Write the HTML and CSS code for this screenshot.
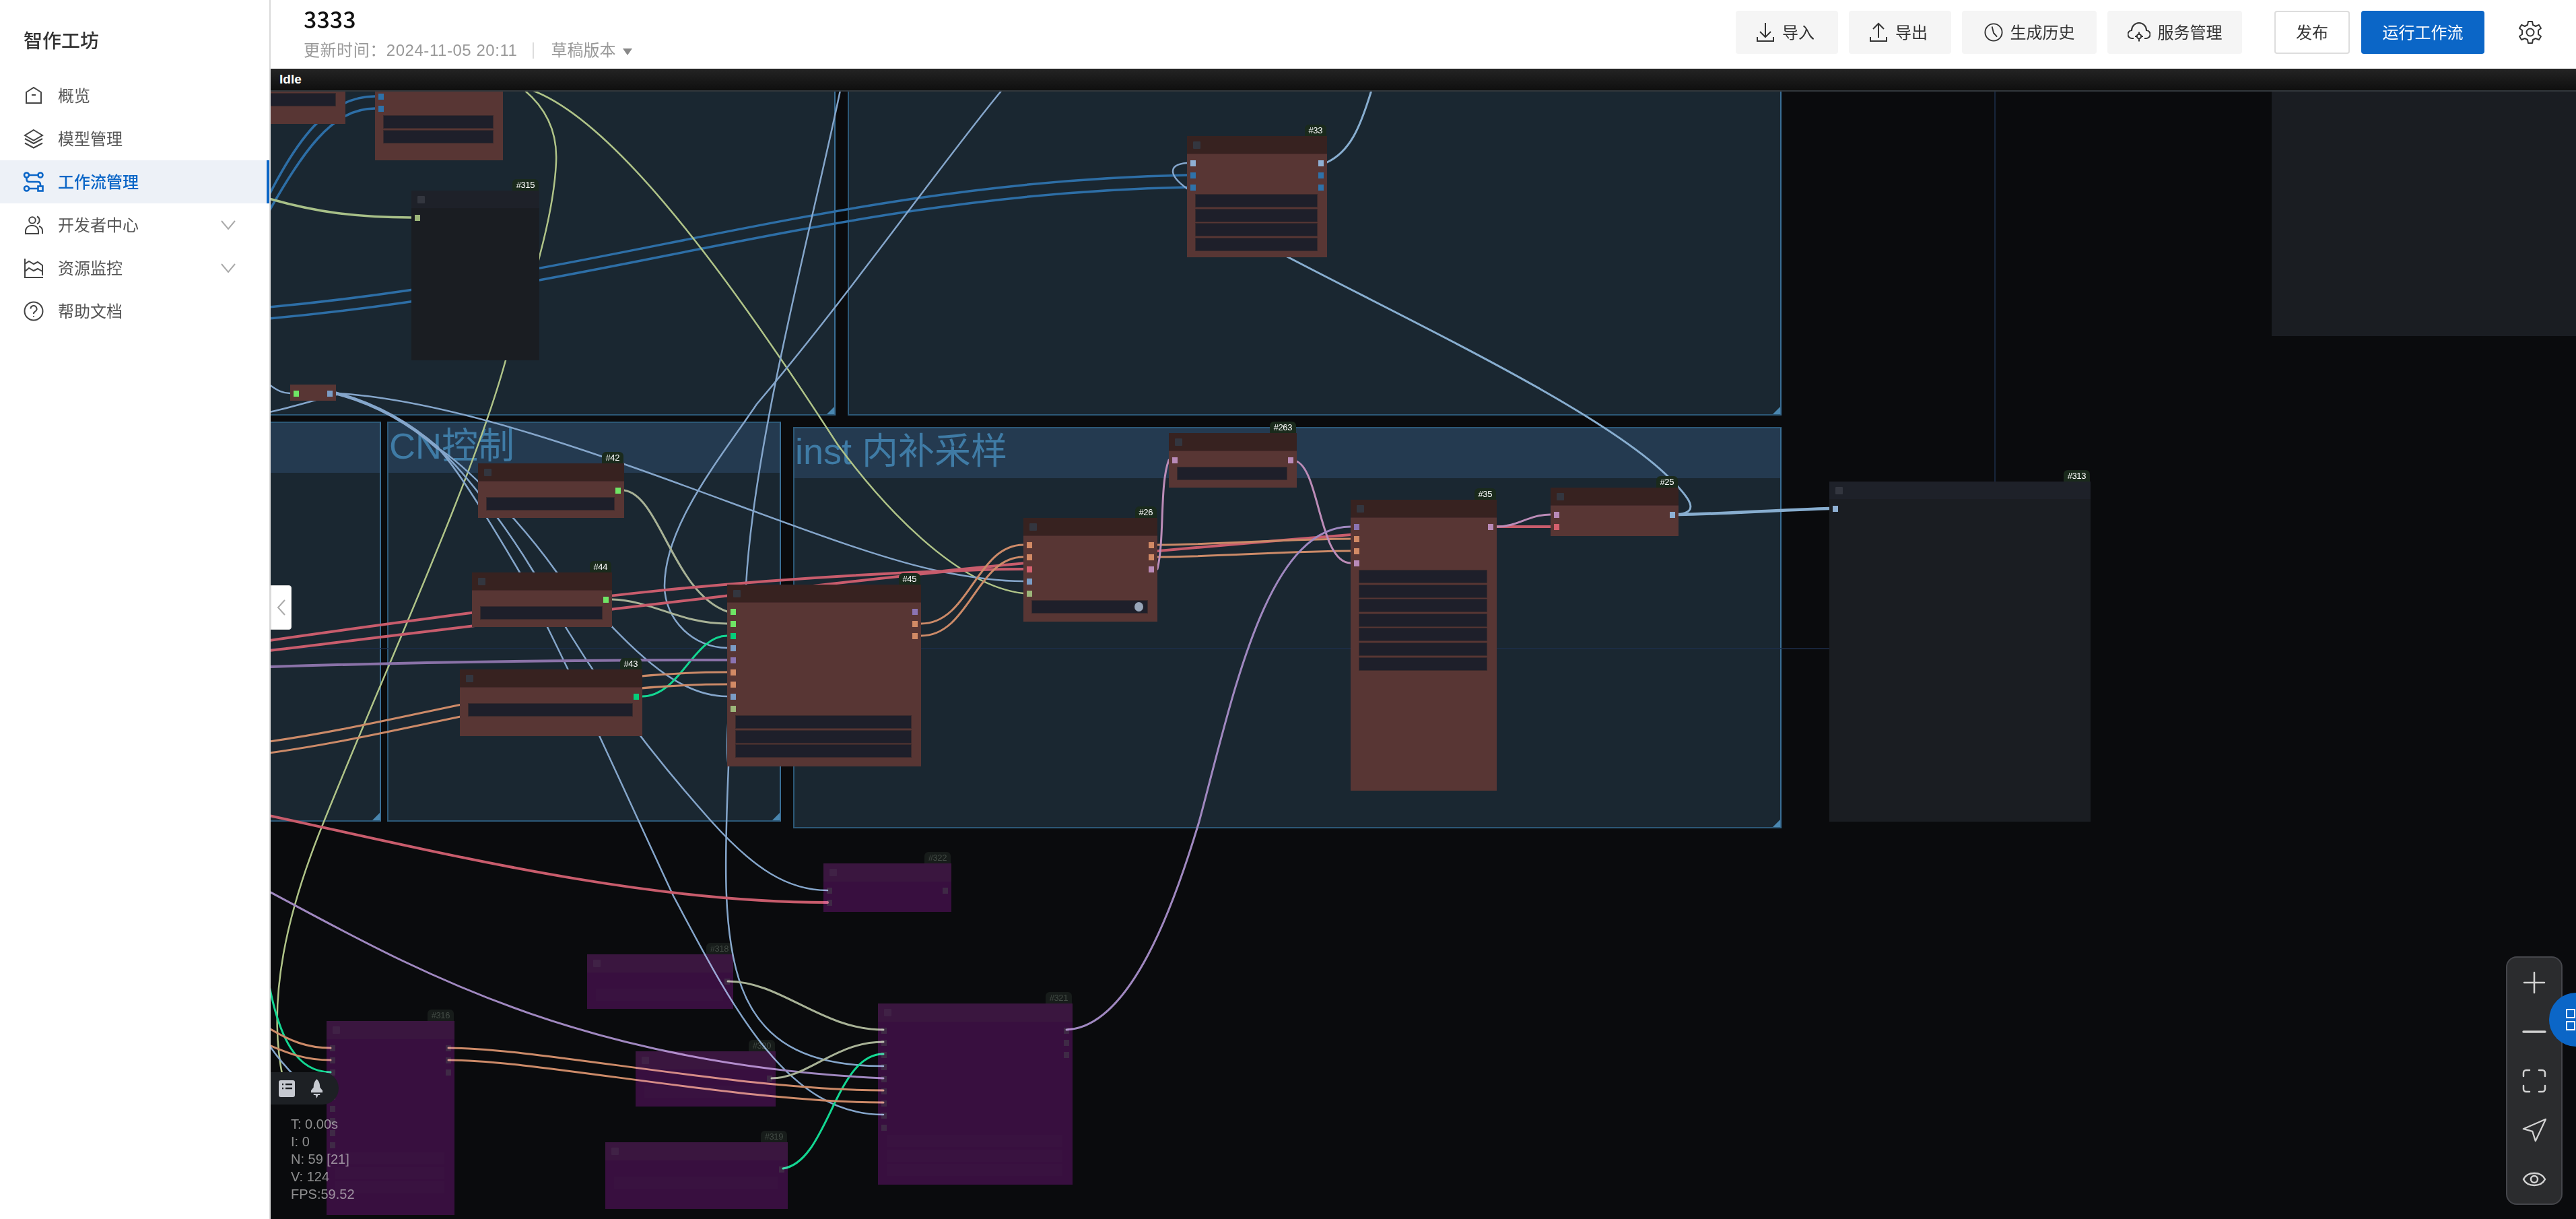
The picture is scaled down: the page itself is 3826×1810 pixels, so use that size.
FILE: index.html
```html
<!DOCTYPE html>
<html lang="zh-CN">
<head>
<meta charset="utf-8">
<title>智作工坊</title>
<link rel="stylesheet" href="styles.css">
</head>
<body>
<div class="app">
  <aside class="sidebar">
    <div class="brand">智作工坊</div>
    <nav class="nav">
      <a class="nav-item"><svg class="nav-ico" viewBox="0 0 32 32"><path d="M5 11 16 4l11 7v16H5z"/><path d="M13 15h6"/></svg><span>概览</span></a>
      <a class="nav-item"><svg class="nav-ico" viewBox="0 0 32 32"><path d="M16 3l13 8-13 7.5L3 11z"/><path d="M3 16l13 7 13-7M3 22.5l13 7 13-7"/></svg><span>模型管理</span></a>
      <a class="nav-item active"><svg class="nav-ico" viewBox="0 0 32 32"><circle cx="5.5" cy="6" r="3.5"/><circle cx="26" cy="6" r="3.5"/><circle cx="5.5" cy="26" r="3.5"/><rect x="22.5" y="22.5" width="7" height="7"/><path d="M9 6h13.5M9 26h13.5M5.500 9.500V12q0 4 4 4H22q4 0 4 4v2.500"/></svg><span>工作流管理</span></a>
      <a class="nav-item"><svg class="nav-ico" viewBox="0 0 32 32"><circle cx="14" cy="9" r="4.800"/><path d="M21 3.500a6 6 0 0 1 0 11"/><path d="M4 29v-4a8 8 0 0 1 8-8h3a8 8 0 0 1 8 8v4z"/><path d="M24 18a7 7 0 0 1 5 7v4"/></svg><span>开发者中心</span><svg class="chev" viewBox="0 0 24 16"><path d="M2 2l10 12L22 2"/></svg></a>
      <a class="nav-item"><svg class="nav-ico" viewBox="0 0 32 32"><path d="M3 2v28h27"/><path d="M3 10l6-4 7 4 6-3 7 5v15"/><path d="M3 21l6-5 7 4 6-3 7 4"/></svg><span>资源监控</span><svg class="chev" viewBox="0 0 24 16"><path d="M2 2l10 12L22 2"/></svg></a>
      <a class="nav-item"><svg class="nav-ico" viewBox="0 0 32 32"><circle cx="16" cy="16" r="13.500"/><path d="M11.500 12.500a4.500 4.500 0 1 1 6.800 3.800c-1.600 1-2.300 2-2.300 3.700"/><path d="M16 23v1.500"/></svg><span>帮助文档</span></a>
    </nav>
  </aside>

  <main class="main">
    <header class="header">
      <div class="doc">
        <div class="doc-title">3333</div>
        <div class="doc-meta"><span class="stamp">更新时间：2024-11-05 20:11</span><i class="meta-sep"></i><span class="draft">草稿版本</span><i class="caret"></i></div>
      </div>
      <div class="actions">
        <button class="btn"><svg class="btn-ico" viewBox="0 0 28 30"><path d="M14 1v21M6 14l8 8 8-8M2 22v6h24v-6"/></svg>导入</button>
        <button class="btn"><svg class="btn-ico" viewBox="0 0 28 30"><path d="M14 23V2M6 10l8-8 8 8M2 22v6h24v-6"/></svg>导出</button>
        <button class="btn wide"><svg class="btn-ico" viewBox="0 0 30 30"><circle cx="15" cy="15" r="13.500"/><path d="M12.500 6l2.500 10 5.500 6"/></svg>生成历史</button>
        <button class="btn wide"><svg class="btn-ico cloud" viewBox="0 0 34 30"><path d="M9 24H7a6 6 0 0 1-1-12 11 11 0 0 1 22 0 6 6 0 0 1-1 12h-2"/><circle cx="17" cy="21" r="3.200"/><path d="M17 14.500v3M17 24.500v4M11 21h3M20 21h3"/></svg>服务管理</button>
        <button class="btn-outline">发布</button>
        <button class="btn-primary">运行工作流</button>
        <svg class="gear" viewBox="0 0 36 36"><path d="M15 2h6l1 5 4 2 5-2 3 5-4 3v6l4 3-3 5-5-2-4 2-1 5h-6l-1-5-4-2-5 2-3-5 4-3v-6l-4-3 3-5 5 2 4-2z"/><circle cx="18" cy="18" r="5.500"/></svg>
      </div>
    </header>

    <section class="canvas">
      <div class="world">
        <div class="group cut" style="left:300px;top:60px;width:941px;height:557px"></div>
        <div class="group cut" style="left:1259px;top:60px;width:1387px;height:557px"></div>
        <div class="group" style="left:300px;top:626px;width:266px;height:594px"><div class="band"></div></div>
        <div class="group" style="left:575px;top:626px;width:585px;height:594px"><div class="band">CN控制</div></div>
        <div class="group" style="left:1178px;top:634px;width:1468px;height:596px"><div class="band">inst 内补采样</div></div>

        <svg class="links" viewBox="0 0 3826 1810">
          <path class="guide" d="M2963 134V715M400 963H2717"/>
          <path class="blue" d="M380 330C440 200 490 143 557 143M385 340C450 220 495 161 557 161M400 456C900 410 1250 270 1763 260M400 473C900 428 1250 288 1763 278"/>
          <path class="sage" d="M400 295C470 315 530 323 611 323"/>
          <path class="lime" d="M779 134C810 160 828 195 826 240C824 290 812 340 802 378C790 430 770 470 751 535C700 720 560 1020 473 1240C430 1350 395 1480 420 1600"/>
          <path class="lime" d="M790 134C900 175 1050 360 1244 660C1310 750 1420 870 1520 881"/>
          <path class="steel" d="M1248 134C1210 320 1120 650 1108 869C1090 950 1075 1100 1082 1138C1070 1420 1070 1583 1312 1583"/>
          <path class="steel" d="M1488 134C1400 240 1260 440 1124 600C1070 680 987 780 987 870C987 920 1030 962 1080 962"/>
          <path class="steel" d="M499 584C780 600 1200 810 1400 849C1440 857 1480 863 1520 863"/>
          <path class="steel" d="M650 665C675 690 725 770 772 850C850 1000 930 1180 1000 1330C1090 1500 1170 1655 1312 1655"/>
          <path class="steel" d="M650 665C680 690 745 770 793 850C870 990 950 1100 1057 1220C1120 1290 1170 1322 1229 1322"/>
          <path class="steel" d="M650 665C690 690 770 770 827 850C900 910 980 1034 1080 1034"/>
          <path class="steel bundle" d="M499 584C560 600 610 630 650 665"/>
          <path class="steel" d="M400 571C412 580 420 584 431 584M400 612C440 603 470 593 500 586M1763 242C1735 244 1735 260 1763 280"/>
          <path class="sky" d="M1971 241C2005 225 2020 190 2037 134M1900 375C2100 480 2380 610 2480 710C2510 740 2525 760 2493 764"/>
          <path class="sky thick" d="M2493 764C2560 763 2650 757 2717 755"/>
          <path class="ash" d="M927 728C980 735 1000 880 1080 908M909 890C970 892 1010 926 1080 926"/>
          <path class="mint" d="M954 1034C1010 1034 1030 944 1080 944M400 1464C415 1540 440 1592 491 1592M1163 1735C1230 1725 1240 1565 1312 1565"/>
          <path class="red" d="M400 951C900 880 1100 860 1400 848C1500 838 1800 810 2006 794M400 966C700 930 1100 880 1400 849C1440 846 1480 845 1520 845M2223 782H2303M400 1211C650 1265 950 1340 1229 1340"/>
          <path class="orange" d="M400 1101C620 1070 820 998 1080 998M400 1118C620 1088 820 1016 1080 1016M1368 926C1440 926 1450 809 1520 809M1368 944C1440 944 1450 827 1520 827M1719 809C1800 809 1920 800 2006 800M1719 827C1800 827 1920 818 2006 818M666 1556C800 1556 1100 1619 1312 1619M666 1574C800 1574 1100 1637 1312 1637M400 1527C430 1545 455 1556 491 1556M400 1552C430 1565 455 1574 491 1574"/>
          <path class="pink" d="M1719 845C1730 800 1722 720 1736 683M1926 685C1960 700 1960 836 2006 836M2223 782C2255 782 2270 764 2303 764"/>
          <path class="violet" d="M1584 1529C1680 1525 1745 1340 1781 1220C1830 1040 1880 782 2006 782M400 1324C600 1430 850 1580 1312 1601"/>
          <path class="plum" d="M400 990C650 982 850 980 1080 980"/>
          <path class="ash" d="M1081 1457C1160 1457 1220 1529 1312 1529M1146 1601C1200 1601 1240 1547 1312 1547"/>
          <path class="steel" d="M400 1552C412 1570 425 1585 440 1600"/>
        </svg>

        <div class="node" style="left:320px;top:84px;width:193px;height:100px"><div class="title"></div><div class="slots"></div><div class="widget"></div><div class="widget"></div></div>

        <div class="node" style="left:557px;top:103px;width:190px;height:135px"><div class="title"></div>
          <div class="slots"><div class="slot"><i class="port deep"></i></div><div class="slot"><i class="port deep"></i></div></div>
          <div class="widget"></div><div class="widget"></div></div>

        <div class="node dark" style="left:611px;top:283px;width:190px;height:252px"><span class="badge">#315</span><div class="title"><i class="dot"></i></div>
          <div class="slots"><div class="slot"><i class="port sg"></i></div></div></div>

        <div class="node" style="left:1763px;top:202px;width:208px;height:180px"><span class="badge">#33</span><div class="title"><i class="dot"></i></div>
          <div class="slots">
            <div class="slot"><i class="port lt"></i><i class="port lt r"></i></div>
            <div class="slot"><i class="port deep"></i><i class="port deep r"></i></div>
            <div class="slot"><i class="port deep"></i><i class="port deep r"></i></div>
          </div><div class="widget"></div><div class="widget"></div><div class="widget"></div><div class="widget"></div></div>

        <div class="node" style="left:431px;top:571px;width:68px;height:24px"><div class="slots"><div class="slot"><i class="port gr"></i><i class="port bl r"></i></div></div></div>

        <div class="node" style="left:710px;top:688px;width:217px;height:81px"><span class="badge">#42</span><div class="title"><i class="dot"></i></div>
          <div class="slots"><div class="slot"><i class="port gr r"></i></div></div><div class="widget"></div></div>

        <div class="node" style="left:701px;top:850px;width:208px;height:81px"><span class="badge">#44</span><div class="title"><i class="dot"></i></div>
          <div class="slots"><div class="slot"><i class="port gr r"></i></div></div><div class="widget"></div></div>

        <div class="node" style="left:683px;top:994px;width:271px;height:99px"><span class="badge">#43</span><div class="title"><i class="dot"></i></div>
          <div class="slots"><div class="slot"><i class="port mt r"></i></div></div><div class="widget"></div></div>

        <div class="node" style="left:1080px;top:868px;width:288px;height:270px"><span class="badge">#45</span><div class="title"><i class="dot"></i></div>
          <div class="slots">
            <div class="slot"><i class="port gr"></i><i class="port pu r"></i></div>
            <div class="slot"><i class="port gr"></i><i class="port or r"></i></div>
            <div class="slot"><i class="port mt"></i><i class="port or r"></i></div>
            <div class="slot"><i class="port bl"></i></div>
            <div class="slot"><i class="port pu"></i></div>
            <div class="slot"><i class="port or"></i></div>
            <div class="slot"><i class="port or"></i></div>
            <div class="slot"><i class="port bl"></i></div>
            <div class="slot"><i class="port sg"></i></div>
          </div><div class="widget"></div><div class="widget"></div><div class="widget"></div></div>

        <div class="node" style="left:1520px;top:769px;width:199px;height:154px"><span class="badge">#26</span><div class="title"><i class="dot"></i></div>
          <div class="slots">
            <div class="slot"><i class="port or"></i><i class="port or r"></i></div>
            <div class="slot"><i class="port or"></i><i class="port or r"></i></div>
            <div class="slot"><i class="port rd"></i><i class="port pk r"></i></div>
            <div class="slot"><i class="port bl"></i></div>
            <div class="slot"><i class="port sg"></i></div>
          </div><div class="widget knobbed"><b class="knob"></b></div></div>

        <div class="node" style="left:1736px;top:643px;width:190px;height:81px"><span class="badge">#263</span><div class="title"><i class="dot"></i></div>
          <div class="slots"><div class="slot"><i class="port pk"></i><i class="port pk r"></i></div></div><div class="widget"></div></div>

        <div class="node" style="left:2006px;top:742px;width:217px;height:432px"><span class="badge">#35</span><div class="title"><i class="dot"></i></div>
          <div class="slots">
            <div class="slot"><i class="port pu"></i><i class="port pk r"></i></div>
            <div class="slot"><i class="port or"></i></div>
            <div class="slot"><i class="port or"></i></div>
            <div class="slot"><i class="port pk"></i></div>
          </div><div class="widget"></div><div class="widget"></div><div class="widget"></div><div class="widget"></div><div class="widget"></div><div class="widget"></div><div class="widget"></div></div>

        <div class="node" style="left:2303px;top:724px;width:190px;height:72px"><span class="badge">#25</span><div class="title"><i class="dot"></i></div>
          <div class="slots">
            <div class="slot"><i class="port pk"></i><i class="port lt r"></i></div>
            <div class="slot"><i class="port rd"></i></div>
          </div></div>

        <div class="node dark" style="left:2717px;top:715px;width:388px;height:505px"><span class="badge">#313</span><div class="title"><i class="dot"></i></div>
          <div class="slots"><div class="slot"><i class="port lt"></i></div></div></div>

        <div class="node dark" style="left:3374px;top:80px;width:500px;height:419px"></div>

        <div class="node bypass" style="left:1223px;top:1282px;width:190px;height:72px"><span class="badge">#322</span><div class="title"><i class="dot"></i></div>
          <div class="slots"><div class="slot"><i class="port"></i><i class="port r"></i></div><div class="slot"><i class="port"></i></div></div></div>

        <div class="node bypass" style="left:872px;top:1417px;width:217px;height:81px"><span class="badge">#318</span><div class="title"><i class="dot"></i></div>
          <div class="slots"><div class="slot"><i class="port r"></i></div></div><div class="widget"></div></div>

        <div class="node bypass" style="left:485px;top:1516px;width:190px;height:288px"><span class="badge">#316</span><div class="title"><i class="dot"></i></div>
          <div class="slots">
            <div class="slot"><i class="port"></i><i class="port r"></i></div>
            <div class="slot"><i class="port"></i><i class="port r"></i></div>
            <div class="slot"><i class="port"></i><i class="port r"></i></div>
            <div class="slot"><i class="port"></i></div><div class="slot"><i class="port"></i></div><div class="slot"><i class="port"></i></div>
            <div class="slot"><i class="port"></i></div><div class="slot"><i class="port"></i></div><div class="slot"><i class="port"></i></div>
          </div><div class="widget"></div><div class="widget"></div><div class="widget"></div></div>

        <div class="node bypass" style="left:944px;top:1561px;width:208px;height:82px"><span class="badge">#320</span><div class="title"><i class="dot"></i></div>
          <div class="slots"><div class="slot"><i class="port r"></i></div></div><div class="widget"></div></div>

        <div class="node bypass" style="left:899px;top:1696px;width:271px;height:99px"><span class="badge">#319</span><div class="title"><i class="dot"></i></div>
          <div class="slots"><div class="slot"><i class="port r"></i></div></div><div class="widget"></div></div>

        <div class="node bypass" style="left:1304px;top:1490px;width:289px;height:269px"><span class="badge">#321</span><div class="title"><i class="dot"></i></div>
          <div class="slots">
            <div class="slot"><i class="port"></i><i class="port r"></i></div>
            <div class="slot"><i class="port"></i><i class="port r"></i></div>
            <div class="slot"><i class="port"></i><i class="port r"></i></div>
            <div class="slot"><i class="port"></i></div><div class="slot"><i class="port"></i></div><div class="slot"><i class="port"></i></div>
            <div class="slot"><i class="port"></i></div><div class="slot"><i class="port"></i></div><div class="slot"><i class="port"></i></div>
          </div><div class="widget"></div><div class="widget"></div><div class="widget"></div></div>
      </div>

      <div class="topbar">Idle</div>

      <div class="collapse"><svg viewBox="0 0 16 24"><path d="M13 1 3 12l10 11"/></svg></div>

      <div class="quick">
        <svg class="book" viewBox="0 0 24 25"><rect width="24" height="25" rx="3"/><path d="M5 6h2M10 6h10M5 12h2M10 12h10"/></svg>
        <svg class="rocket" viewBox="0 0 20 30"><path d="M10 0c4 4 5 8 5 13l4 5v3H1v-3l4-5c0-5 1-9 5-13z"/><path d="M5 23h10v2h-3l-2 5-2-5H5z"/></svg>
      </div>

      <div class="stats"><div>T: 0.00s</div><div>I: 0</div><div>N: 59 [21]</div><div>V: 124</div><div>FPS:59.52</div></div>

      <div class="tools">
        <div class="tool"><svg viewBox="0 0 36 36"><path d="M18 3v30M3 18h30"/></svg></div>
        <div class="tool"><svg viewBox="0 0 36 36"><path class="heavy" d="M2 18h32"/></svg></div>
        <div class="tool"><svg viewBox="0 0 36 36"><path d="M11 2H6a4 4 0 0 0-4 4v5M25 2h5a4 4 0 0 1 4 4v5M11 34H6a4 4 0 0 1-4-4v-5M25 34h5a4 4 0 0 0 4-4v-5"/></svg></div>
        <div class="tool"><svg viewBox="0 0 40 40"><path d="M39 2 2 18l15 4 5 16z"/></svg></div>
        <div class="tool"><svg viewBox="0 0 36 36"><path d="M2 18C8 6 28 6 34 18 28 30 8 30 2 18z"/><circle cx="18" cy="18" r="5"/></svg></div>
      </div>
      <div class="fab"><svg viewBox="0 0 32 32"><rect x="1" y="1" width="12" height="12"/><rect x="1" y="19" width="12" height="12"/><rect x="19" y="1" width="12" height="12"/><rect x="19" y="19" width="12" height="12"/></svg></div>
    </section>
  </main>
</div>
</body>
</html>
```

FILE: styles.css
```css
* { box-sizing: border-box; }
html, body { margin: 0; height: 100%; }
body {
  font-family: "Liberation Sans", "Noto Sans CJK SC", sans-serif;
  background: #fff;
  color: #333;
  overflow: hidden;
}
.app { display: flex; width: 3826px; height: 1810px; }

/* sidebar */
.sidebar { width: 402px; flex: none; border-right: 2px solid #d9d9d9; background: #fff; }
.brand { height: 110px; padding: 43px 0 0 35px; font-size: 28px; line-height: 38px; font-weight: 500; color: #333; }
.nav-item { position: relative; height: 64px; display: flex; align-items: center; gap: 20px; padding-left: 34px; font-size: 24px; color: #555; }
.nav-item span { margin-bottom: 3px; }
.nav-item.active { background: #edf1f7; color: #0b66c7; font-weight: 500; }
.nav-item.active::after { content: ""; position: absolute; right: 0; top: 0; bottom: 0; width: 4px; background: #0b66c7; }
.nav-ico { width: 32px; height: 32px; flex: none; fill: none; stroke: #444; stroke-width: 2; }
.active .nav-ico { stroke: #0b66c7; stroke-width: 2.6; }
.chev { width: 24px; height: 16px; margin-left: auto; margin-right: 49px; fill: none; stroke: #aaa; stroke-width: 2; }

/* header */
.main { flex: 1; min-width: 0; display: flex; flex-direction: column; }
.header { height: 102px; flex: none; display: flex; justify-content: space-between; padding: 0 50px 0 49px; background: #fff; }
.doc-title { margin-top: 9px; font-family: "Noto Sans CJK SC", sans-serif; font-size: 34px; line-height: 38px; font-weight: 500; color: #111; }
.doc-meta { margin-top: 11px; display: flex; align-items: center; font-size: 24px; line-height: 34px; color: #999; }
.stamp { letter-spacing: .55px; }
.meta-sep { width: 2px; height: 24px; margin: 0 25px 0 23px; background: #ddd; }
.caret { width: 0; height: 0; margin-left: 11px; margin-top: 3px; border: 7px solid transparent; border-top: 10px solid #888; border-bottom: 0; }
.actions { display: flex; align-items: flex-start; padding-top: 16px; gap: 16px; }
.btn, .btn-outline, .btn-primary { height: 64px; font: inherit; font-size: 24px; border: 0; border-radius: 4px; padding: 0 0 3px; display: flex; align-items: center; justify-content: center; }
.btn { width: 152px; gap: 11px; padding-right: 5px; background: #f5f5f5; color: #333; }
.btn.wide { width: 200px; padding-right: 0; }
.btn-ico { width: 28px; height: 30px; margin-top: 3px; fill: none; stroke: #333; stroke-width: 2; flex: none; }
.btn-ico.cloud { width: 34px; }
.btn-outline { width: 112px; margin-left: 32px; background: #fff; border: 2px solid #ddd; color: #333; }
.btn-primary { width: 183px; margin-left: 1px; background: #0b66c7; color: #fff; }
.gear { width: 36px; height: 36px; margin: 14px 0 0 34px; fill: none; stroke: #333; stroke-width: 2; stroke-linejoin: round; }

/* canvas */
.canvas { position: relative; flex: 1; overflow: hidden; background: #0a0b0d; }
.world { position: absolute; left: -402px; top: -102px; width: 3826px; height: 1810px; }
.group { position: absolute; background: #1a2731; border: 2px solid #2c5877; border-right-color: #3a6f96; }
.group::after { content: ""; position: absolute; right: 0; bottom: 0; width: 11px; height: 11px; background: #4a87b0; clip-path: polygon(100% 0, 100% 100%, 0 100%); }
.band { height: 74px; background: #243a50; padding-left: 1px; font-size: 54px; line-height: 68px; color: #3f7ba5; white-space: nowrap; }
.links { position: absolute; inset: 0; width: 3826px; height: 1810px; fill: none; stroke-linecap: round; }
.guide { stroke: #1e2f4b; stroke-width: 1.5; stroke-linecap: butt; }
.blue { stroke: #2d6ea6; stroke-width: 3.5; }
.sage { stroke: #a8c088; stroke-width: 3.5; }
.lime { stroke: #b0c488; stroke-width: 2.5; }
.steel { stroke: #85a6cb; stroke-width: 2.5; }
.steel.bundle { stroke-width: 5; }
.sky { stroke: #88aed0; stroke-width: 3; }
.sky.thick { stroke-width: 4.5; }
.ash { stroke: #a8b296; stroke-width: 3; }
.mint { stroke: #13d792; stroke-width: 3; }
.red { stroke: #c85c6c; stroke-width: 4; }
.orange { stroke: #cc8a68; stroke-width: 3; }
.pink { stroke: #bc8cb8; stroke-width: 3; }
.violet { stroke: #a088c0; stroke-width: 3; }
.plum { stroke: #8a72a8; stroke-width: 4; }

.node { position: absolute; background: #583634; }
.title { height: 27px; display: flex; align-items: center; padding-left: 9px; background: #372220; border-bottom: 1px solid #45292a; }
.dot { width: 11px; height: 11px; background: #33363f; border-radius: 1px; }
.slots { padding-top: 4px; }
.slot { height: 18px; padding: 0 5px; display: flex; align-items: center; }
.port { width: 8px; height: 9px; flex: none; background: #777; }
.port.r { margin-left: auto; }
.gr { background: #6fe565; }
.mt { background: #05ce7a; }
.bl { background: #7b9dc6; }
.lt { background: #8fb0d4; }
.deep { background: #2e72aa; }
.pu { background: #8b74b2; }
.or { background: #d28a65; }
.rd { background: #d4606e; }
.pk { background: #b98ab8; }
.sg { background: #9db67a; }
.widget { height: 18px; margin: 2px 15px 3.6px 13px; background: #1e1f2a; box-shadow: 0 0 0 1px #3a2a2c; }
.knobbed { display: flex; align-items: center; justify-content: flex-end; padding-right: 6px; }
.knob { width: 13px; height: 14px; border-radius: 50%; background: #97a5b8; }
.badge { position: absolute; right: 1px; bottom: 100%; height: 17px; padding: 0 6px; border-radius: 6px 6px 0 0; background: #1a2a1c; font-size: 13px; line-height: 18px; letter-spacing: -.4px; color: #fff; }
.node.dark { background: #1a1d22; }
.dark .title { background: #1e2129; border-bottom-color: #1b1d22; }
.node.bypass { background: #300435; mix-blend-mode: screen; }
.bypass .title { background: #320b35; border-bottom-color: transparent; }
.bypass .dot { background: #38183c; }
.bypass .port { background: #37203c; }
.bypass .widget { background: #310736; box-shadow: none; }
.bypass .badge { background: #0e120e; color: #3c443c; }

/* overlays */
.topbar { position: absolute; left: 0; right: 0; top: 0; height: 34px; padding-left: 13px; background: linear-gradient(#242424, #0f0f0f); border-bottom: 2px solid #32373c; font-size: 19px; line-height: 32px; font-weight: 700; color: #fff; }
.collapse { position: absolute; left: 0; top: 767px; width: 31px; height: 66px; display: flex; align-items: center; justify-content: center; background: #fff; border: 1px solid #ddd; border-radius: 0 4px 4px 0; }
.collapse svg { width: 16px; height: 24px; fill: none; stroke: #aaa; stroke-width: 2; }
.quick { position: absolute; left: 0; top: 1490px; width: 101px; height: 48px; padding-left: 12px; display: flex; align-items: center; gap: 23px; background: #1d2024; border-radius: 0 24px 24px 0; }
.book { width: 24px; height: 25px; fill: #c6c9d0; stroke: none; }
.book path { stroke: #1d2024; stroke-width: 2.5; fill: none; }
.rocket { width: 19px; height: 29px; fill: #c6c9d0; }
.stats { position: absolute; left: 30px; top: 1554px; font-size: 20px; line-height: 26px; color: rgba(205, 205, 205, .68); white-space: nowrap; }
.tools { position: absolute; right: 20px; bottom: 21px; width: 84px; height: 369px; padding-top: 0; background: #2b2c2e; border: 2px solid #45464b; border-radius: 16px; display: flex; flex-direction: column; }
.tool { flex: 1; display: flex; align-items: center; justify-content: center; }
.tool svg { width: 36px; height: 36px; fill: none; stroke: #d2d2d2; stroke-width: 2.5; stroke-linecap: round; stroke-linejoin: round; }
.tool .heavy { stroke-width: 3.5; }
.fab { position: absolute; left: 3384px; top: 1372px; width: 80px; height: 80px; padding: 24px 0 0 25px; border-radius: 50%; background: #0b66c7; }
.fab svg { display: block; width: 32px; height: 32px; fill: none; stroke: #fff; stroke-width: 2; }
```
